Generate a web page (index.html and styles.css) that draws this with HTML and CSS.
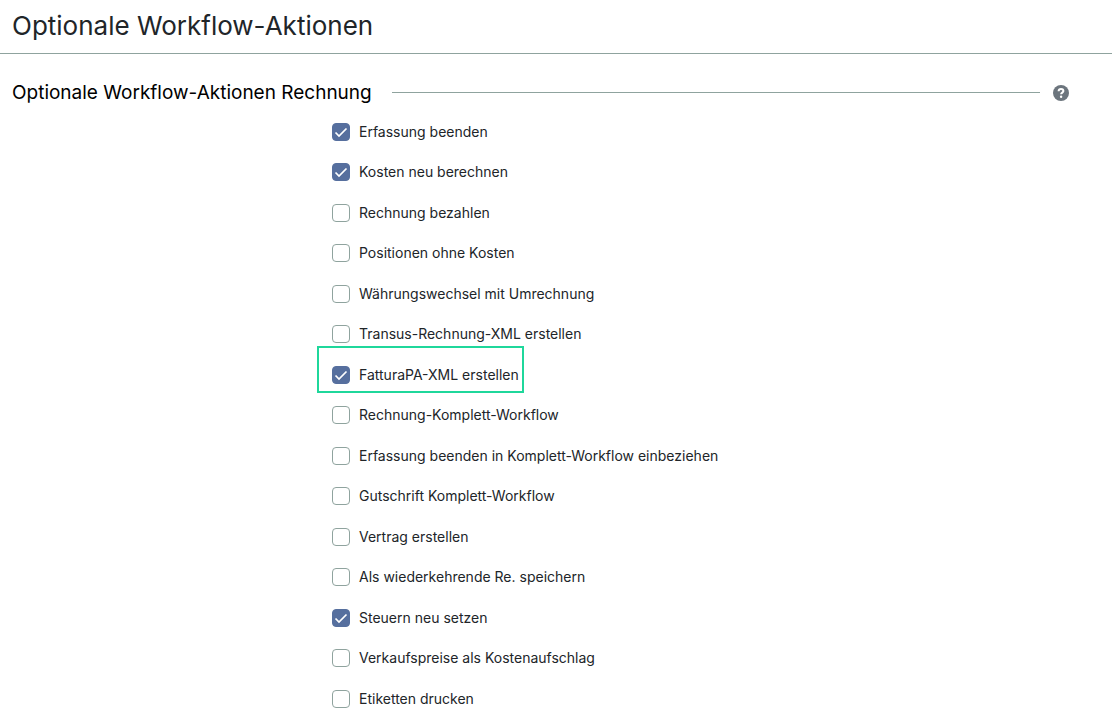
FILE: index.html
```
<!DOCTYPE html>
<html lang="de">
<head>
  <meta charset="UTF-8">
  <meta name="viewport" content="width=device-width, initial-scale=1.0">
  <title>Optionale Workflow-Aktionen</title>
  <link rel="stylesheet" href="styles.css">
</head>
<body>
  <header class="page-header">
    <h1>Optionale Workflow-Aktionen</h1>
  </header>

  <main class="content">
    <div class="section-title">
      <h2>Optionale Workflow-Aktionen Rechnung</h2>
      <span class="line"></span>
      <button type="button" class="help" aria-label="Hilfe">
        <svg viewBox="0 0 16 16" width="16" height="16" aria-hidden="true">
          <circle cx="8" cy="8" r="8" fill="#6c757d"/>
          <path d="M5.600 6.200C5.700 4.600 6.700 4 8 4c1.400 0 2.400.8 2.400 2 0 1.700-2.300 1.600-2.300 3.300" fill="none" stroke="#fff" stroke-width="2"/>
          <circle cx="8.100" cy="11.700" r="1.200" fill="#fff"/>
        </svg>
      </button>
    </div>

    <ul class="options">
      <li><label><input type="checkbox" checked>Erfassung beenden</label></li>
      <li><label><input type="checkbox" checked>Kosten neu berechnen</label></li>
      <li><label><input type="checkbox">Rechnung bezahlen</label></li>
      <li><label><input type="checkbox">Positionen ohne Kosten</label></li>
      <li><label><input type="checkbox">Währungswechsel mit Umrechnung</label></li>
      <li><label><input type="checkbox">Transus-Rechnung-XML erstellen</label></li>
      <li><label class="highlight"><input type="checkbox" checked>FatturaPA-XML erstellen</label></li>
      <li><label><input type="checkbox">Rechnung-Komplett-Workflow</label></li>
      <li><label><input type="checkbox">Erfassung beenden in Komplett-Workflow einbeziehen</label></li>
      <li><label><input type="checkbox">Gutschrift Komplett-Workflow</label></li>
      <li><label><input type="checkbox">Vertrag erstellen</label></li>
      <li><label><input type="checkbox">Als wiederkehrende Re. speichern</label></li>
      <li><label><input type="checkbox" checked>Steuern neu setzen</label></li>
      <li><label><input type="checkbox">Verkaufspreise als Kostenaufschlag</label></li>
      <li><label><input type="checkbox">Etiketten drucken</label></li>
    </ul>
  </main>
</body>
</html>
```
FILE: styles.css
```
* {
  box-sizing: border-box;
}
body {
  margin: 0;
  font-family: Inter, "Liberation Sans", sans-serif;
  font-size: 14px;
  line-height: 18px;
  color: #212529;
  background-color: #fff;
}
h1, h2 {
  margin: 0;
  font-weight: 400;
}
.page-header {
  padding: 10px 12px 11px;
  border-bottom: 1px solid #8fa39e;
}
h1 {
  font-size: 26px;
  line-height: 32px;
}
.content {
  padding: 26px 12px 0;
}
.section-title {
  display: flex;
  align-items: center;
  padding-right: 31px;
}
h2 {
  font-size: 19px;
  line-height: 25px;
  color: #000;
}
.line {
  flex: 1;
  height: 1px;
  margin: 0 13px 0 20px;
  background-color: #8fa39e;
}
.help {
  display: flex;
  padding: 0;
  border: none;
  background: none;
  cursor: pointer;
}
.options {
  list-style: none;
  margin: 7px 0 0;
  padding: 0 0 0 320px;
}
.options li {
  display: flex;
  align-items: flex-start;
}
.options li:nth-child(even) {
  padding-bottom: 1px;
}
label {
  display: flex;
  align-items: center;
  gap: 9px;
  position: relative;
  min-height: 40px;
}
input[type="checkbox"] {
  appearance: none;
  flex: none;
  width: 18px;
  height: 18px;
  margin: 0;
  border: 1px solid #8fa39e;
  border-radius: 4px;
  background-color: #fff;
}
input[type="checkbox"]:checked {
  border-color: #566f9e;
  background: #566f9e url("data:image/svg+xml,%3Csvg xmlns='http://www.w3.org/2000/svg' viewBox='0 0 16 16'%3E%3Cpath d='M2.500 8.500l3.500 3.500L13.500 4.500' fill='none' stroke='white' stroke-width='1.700'/%3E%3C/svg%3E") center / 16px 16px no-repeat;
}
/* frame around the highlighted action */
.highlight::after {
  content: "";
  position: absolute;
  top: -9px;
  right: -5px;
  bottom: 2px;
  left: -15px;
  border: 2px solid #1fd79b;
  pointer-events: none;
}
```
